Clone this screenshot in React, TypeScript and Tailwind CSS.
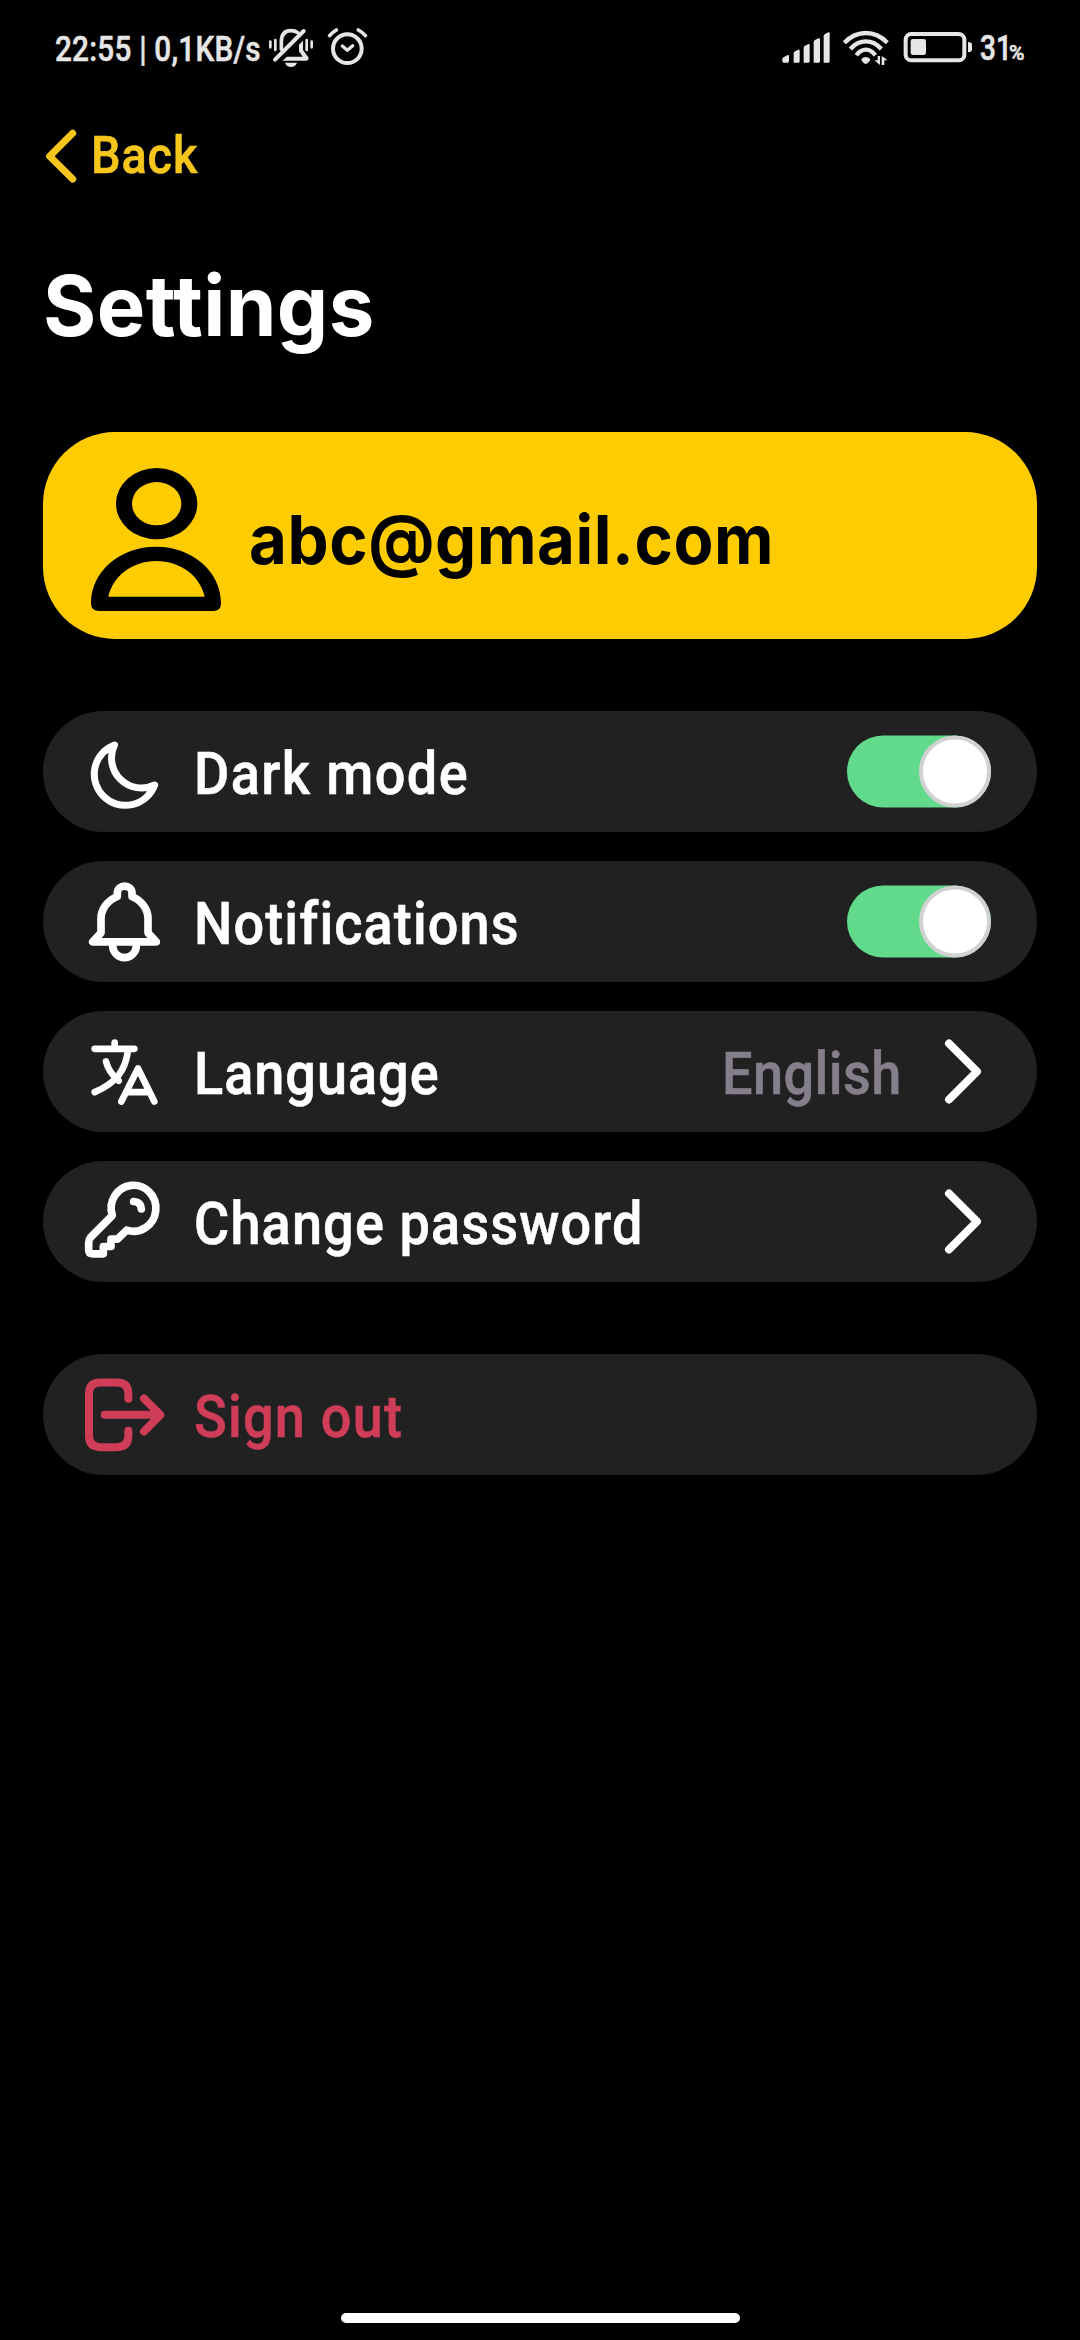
import React, { useState } from "react";
import type { ReactNode } from "react";

function StatusBar() {
  return (
    <header className="flex h-[100px] shrink-0 items-center justify-between pr-[55px] pl-[55px] text-[#e6e6e6]">
      <div className="flex items-center">
        <span className="w-[213px] origin-left scale-x-[.85] text-[35px] font-medium tracking-[0.25px] whitespace-nowrap [-webkit-text-stroke:0.5px]">
          22:55 | 0,1KB/s
        </span>
        <svg className="h-[44px] w-[46px]" viewBox="684 54 138 132" fill="none" stroke="currentColor" strokeLinecap="round">
          <path d="M691 95V112M706 90V120M800 90V120M815 95V112" strokeWidth="8" />
          <path d="M724 118V96C724 72 736 62 753 62C761 62 768 64 773 68" strokeWidth="11" />
          <path d="M705 149L791 63" strokeWidth="12" />
          <path d="M777 104L789 92V120L805 142Q808 152 798 152H727L741 140H788L777 124Z" fill="currentColor" stroke="none" />
          <path d="M735 158H771Q766 171 753 171Q740 171 735 158Z" fill="currentColor" stroke="none" />
        </svg>
        <svg className="ml-[13px] h-[44px] w-[42px]" viewBox="861 54 126 132" fill="none" stroke="currentColor" strokeLinecap="round" strokeLinejoin="round">
          <circle cx="922" cy="116" r="43" strokeWidth="12" />
          <path d="M869 77Q877 67 889 60M955 60Q968 67 976 77" strokeWidth="11" />
          <path d="M907 108L922 121L938 107" strokeWidth="10" />
        </svg>
      </div>
      <div className="flex items-center">
        <svg className="h-[44px] w-[50px]" viewBox="60 54 150 132" fill="currentColor">
          <path d="M64 154V147Q65 143 69 141L80 135Q84 134 84 139V154Q84 158 80 158H68Q64 158 64 154Z" />
          <path d="M98 158V131Q98 127 102 124L112 119Q116 118 116 122V154Q116 158 112 158Z" />
          <path d="M128 158V113Q128 109 132 107L142 102Q146 101 146 105V154Q146 158 142 158Z" />
          <path d="M158 158V97Q158 92 162 90L172 85Q177 84 177 88V154Q177 158 173 158Z" />
          <path d="M188 158V79Q188 74 192 72L202 67Q206 66 206 70V154Q206 158 202 158Z" />
        </svg>
        <svg className="ml-[11px] h-[44px] w-[48px]" viewBox="243 54 144 132" fill="none" stroke="currentColor">
          <path d="M250 98Q279 69 315 69Q350 69 379 98" strokeWidth="13" />
          <path d="M268 117Q288 94 315 94Q341 94 361 117" strokeWidth="13" />
          <path d="M286 136Q298 119 315 119Q331 119 343 136" strokeWidth="13" />
          <path d="M301 147Q314 135 328 147Q326 158 314 162Q303 158 301 147Z" fill="currentColor" stroke="none" />
          <path d="M350 138H357V165L340 151H350ZM362 165V138L380 151H370V165Z" fill="currentColor" stroke="none" />
        </svg>
        <svg className="ml-[13px] h-[44px] w-[70px]" viewBox="426 54 210 132" fill="currentColor">
          <rect x="434" y="72" width="176" height="79" rx="17" fill="none" stroke="currentColor" strokeWidth="12" />
          <rect x="449" y="87" width="46" height="48" rx="7" />
          <path d="M621 96Q633 96 633 104V119Q633 126 621 126Z" />
        </svg>
        <div className="ml-[7px] flex items-baseline">
          <span className="w-[29px] origin-left -translate-y-px scale-x-[.8] text-[35px] font-medium [-webkit-text-stroke:0.6px]">31</span>
          <span className="w-[16px] -translate-y-px text-[21px] font-medium [-webkit-text-stroke:0.6px]">%</span>
        </div>
      </div>
    </header>
  );
}

function Row({ icon, label, danger, children }: { icon: ReactNode; label: ReactNode; danger?: boolean; children?: ReactNode }) {
  return (
    <div
      className={
        danger
          ? "flex h-[121px] items-center rounded-full bg-[#212121] pr-[46px] pl-[36px] text-[#cf3d58]"
          : "flex h-[121px] items-center rounded-full bg-[#212121] pr-[46px] pl-[36px] text-white"
      }
    >
      {icon}
      <div className="ml-[25px] flex-1 origin-left translate-y-[2px] text-[60px] leading-[72px] font-medium whitespace-nowrap [-webkit-text-stroke:0.6px]">
        {label}
      </div>
      {children}
    </div>
  );
}

function RowIcon({ viewBox, width, children }: { viewBox: string; width: number; children: ReactNode }) {
  return (
    <svg
      className="size-[90px] shrink-0"
      viewBox={viewBox}
      fill="none"
      stroke="currentColor"
      strokeWidth={width}
      strokeLinecap="round"
      strokeLinejoin="round"
    >
      {children}
    </svg>
  );
}

function Toggle() {
  const [on, setOn] = useState(true);
  return (
    <button
      role="switch"
      aria-checked={on}
      onClick={() => setOn(!on)}
      className={
        on
          ? "flex h-[72px] w-[144px] -translate-y-[0.5px] justify-end rounded-full bg-[#61da8b]"
          : "flex h-[72px] w-[144px] -translate-y-[0.5px] justify-start rounded-full bg-[#555555]"
      }
    >
      <span className="size-[72px] rounded-full border-4 border-[#d1d1d1] bg-white" />
    </button>
  );
}

function Chevron() {
  return (
    <svg
      className="mr-[10px] h-[64px] w-[36px] -translate-y-[0.5px] overflow-visible"
      viewBox="795 117 108 192"
      fill="none"
      stroke="currentColor"
      strokeWidth="24"
      strokeLinecap="round"
      strokeLinejoin="round"
    >
      <path d="M807 129L891 213L807 297" />
    </svg>
  );
}

export default function App() {
  return (
    <div className="flex h-[2340px] w-[1080px] flex-col overflow-hidden bg-black font-['Roboto',sans-serif]">
      <StatusBar />

      <button className="mt-[20px] ml-[46px] flex h-[72px] w-[160px] items-center text-[#f6c61c]">
        <svg
          className="h-[72px] w-[30px] shrink-0 overflow-visible"
          viewBox="48 30 90 216"
          fill="none"
          stroke="currentColor"
          strokeWidth="21"
          strokeLinecap="round"
          strokeLinejoin="round"
        >
          <path d="M128 70L59 139L128 207" />
        </svg>
        <span className="ml-[15px] origin-left scale-x-[.9] text-[52px] font-medium tracking-[1px] [-webkit-text-stroke:0.6px]">Back</span>
      </button>

      <h1 className="mt-[64px] ml-[43px] h-[100px] origin-left scale-x-[.97] font-['Inter',sans-serif] text-[84px] leading-[100px] font-bold tracking-[0.4px] text-white">
        Settings
      </h1>

      <main className="mx-[43px] mt-[76px] flex flex-col">
        <section className="flex h-[207px] items-center rounded-[72px] bg-[#ffcc02] pl-[48px] text-black">
          <svg className="h-[143px] w-[130px] translate-y-[4px]" viewBox="183 144 390 429" fill="currentColor" fillRule="evenodd">
            <path d="M380 144A122 107 0 1 1 380 358A122 107 0 1 1 380 144ZM380 186A74 65 0 1 0 380 316A74 65 0 1 0 380 186Z" />
            <path d="M183 550C183 454 270 380 378 380S573 454 573 550Q573 573 550 573H208Q183 573 183 550ZM235 530H524C512 470 452 423 379 423S248 470 235 530Z" />
          </svg>
          <span className="ml-[28px] origin-left translate-y-[3px] scale-x-[.96] font-['Inter',sans-serif] text-[68px] font-bold tracking-[0.6px]">abc@gmail.com</span>
        </section>

        <section className="mt-[72px] flex flex-col gap-[29px]">
          <Row
            icon={
              <RowIcon viewBox="147 79.5 270 270" width={21}>
                <path d="M253.5 133.5A93.5 93.5 0 1 0 374 253.5A90 90 0 0 1 253.5 133.5Z" />
              </RowIcon>
            }
            label={<span className="inline-block origin-left scale-x-[.9] tracking-[1.6px]">Dark mode</span>}
          >
            <Toggle />
          </Row>
          <Row
            icon={
              <RowIcon viewBox="147 529.5 270 270" width={23}>
                <path d="M262 588C232 600 213 626 213 655V697L188 724H379L354 697V655C354 626 335 600 306 588V578C306 550 262 550 262 578Z" />
                <path d="M248 735A35.5 36.5 0 0 0 319 735" />
              </RowIcon>
            }
            label={<span className="inline-block origin-left scale-x-[.9] tracking-[1.25px]">Notifications</span>}
          >
            <Toggle />
          </Row>
          <Row
            icon={
              <RowIcon viewBox="147 79.5 270 270" width={20}>
                <path d="M254 126V142M194 145H313M294 150C286 210 260 246 194 275M228 183C233 203 246 224 266 241" />
                <path d="M274 303L324 204L373 303M290 275H358" />
              </RowIcon>
            }
            label={<span className="inline-block origin-left scale-x-[.9] tracking-[1.1px]">Language</span>}
          >
            <span className="mr-[43px] origin-right translate-y-[2px] scale-x-[.9] text-[60px] leading-[72px] font-medium tracking-[0.5px] text-[#857e8b] [-webkit-text-stroke:0.6px]">
              English
            </span>
            <Chevron />
          </Row>
          <Row
            icon={
              <RowIcon viewBox="147 529.5 270 270" width={23}>
                <path d="M290 689A67 69 0 1 0 247 645L182 710Q176 717 176 726V748Q176 760 188 760H220V738H243V716H262Z" />
                <path d="M311 603Q333 605 334 625" />
              </RowIcon>
            }
            label={<span className="inline-block origin-left scale-x-[.9] tracking-[1.3px]">Change password</span>}
          >
            <Chevron />
          </Row>
        </section>

        <section className="mt-[72px]">
          <Row
            danger
            icon={
              <RowIcon viewBox="147 88.5 270 270" width={24}>
                <path d="M295 175V160Q295 126 261 126H211Q177 126 177 160V286Q177 320 211 320H261Q295 320 295 286V271" />
                <path d="M224 223H388M342 174L391 223L342 273" />
              </RowIcon>
            }
            label={<span className="inline-block origin-left scale-x-[.9] tracking-[1.4px]">Sign out</span>}
          />
        </section>
      </main>

      <footer className="mt-auto mb-[17px] flex justify-center">
        <div className="h-[10px] w-[399px] rounded-full bg-white" />
      </footer>
    </div>
  );
}
